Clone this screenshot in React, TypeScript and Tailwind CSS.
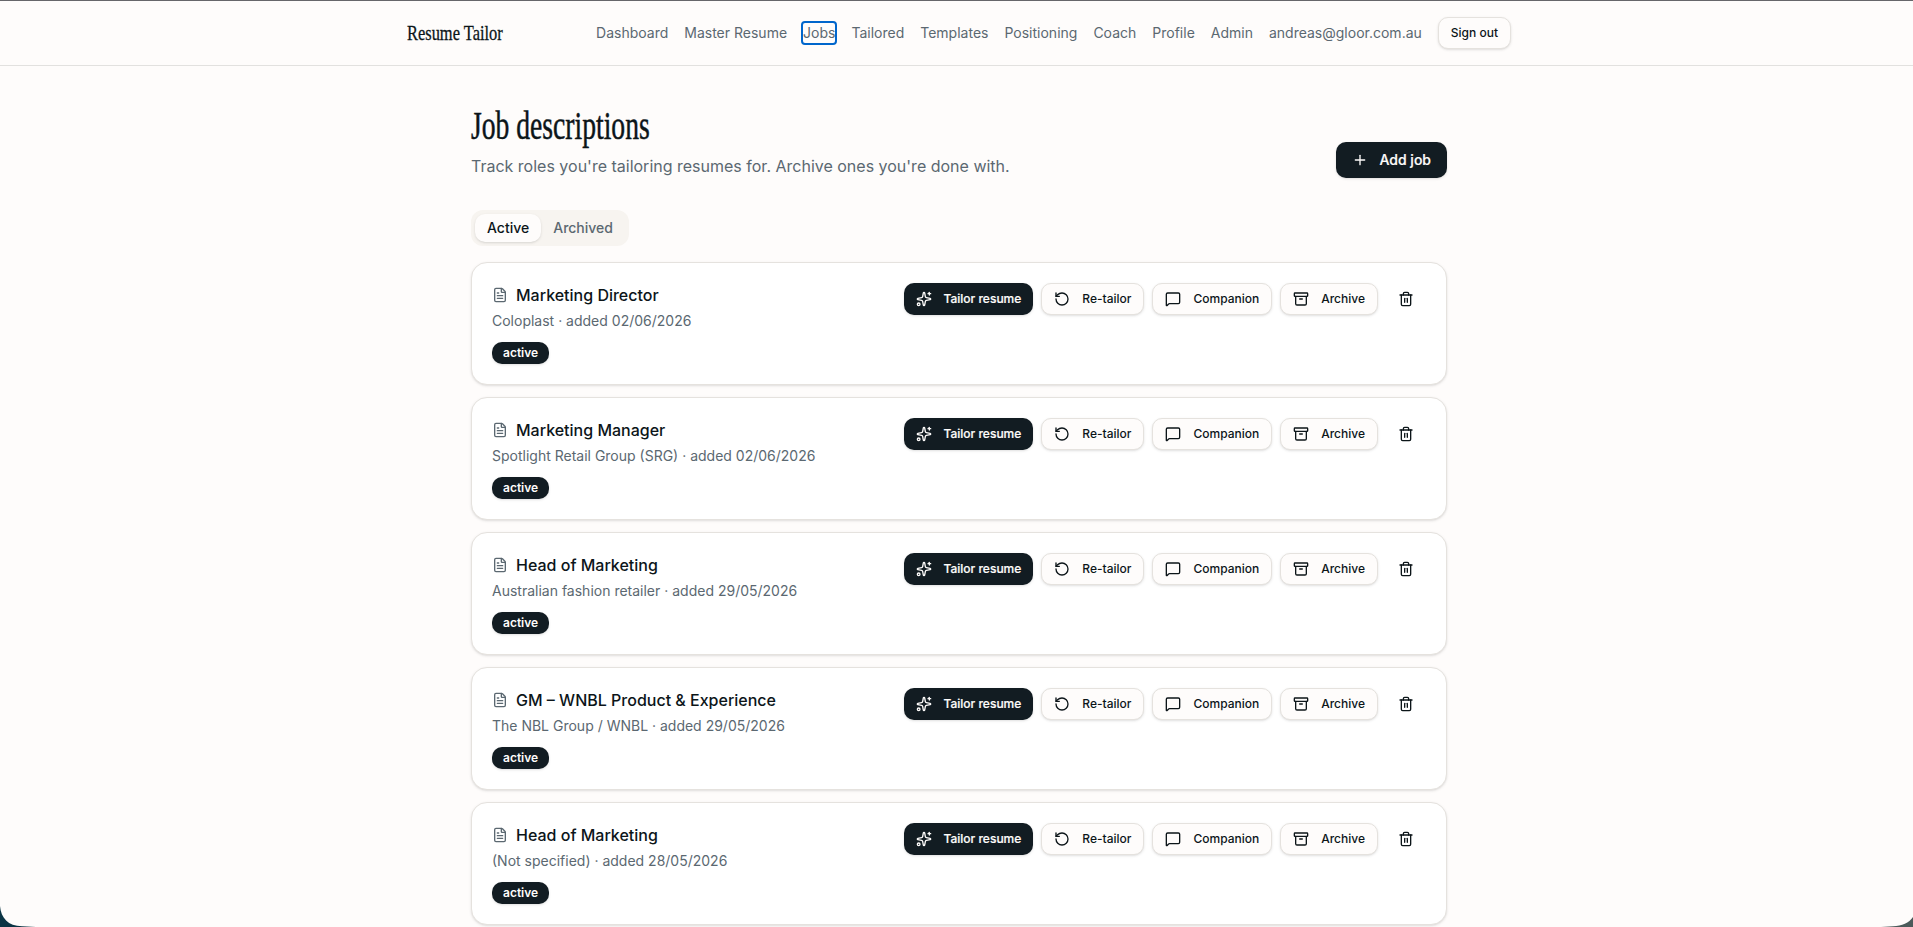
import type { ReactNode } from "react"
import { clsx } from "clsx"
import {
  Archive,
  FileText,
  MessageSquare,
  Plus,
  RotateCcw,
  Sparkles,
  Trash2,
} from "lucide-react"

type Job = {
  id: number
  title: string
  company: string
  added: string
  status: string
}

const navItems = [
  "Dashboard",
  "Master Resume",
  "Jobs",
  "Tailored",
  "Templates",
  "Positioning",
  "Coach",
  "Profile",
  "Admin",
]

const jobs: Job[] = [
  { id: 1, title: "Marketing Director", company: "Coloplast", added: "02/06/2026", status: "active" },
  { id: 2, title: "Marketing Manager", company: "Spotlight Retail Group (SRG)", added: "02/06/2026", status: "active" },
  { id: 3, title: "Head of Marketing", company: "Australian fashion retailer", added: "29/05/2026", status: "active" },
  { id: 4, title: "GM – WNBL Product & Experience", company: "The NBL Group / WNBL", added: "29/05/2026", status: "active" },
  { id: 5, title: "Head of Marketing", company: "(Not specified)", added: "28/05/2026", status: "active" },
]

type ButtonProps = {
  children?: ReactNode
  icon?: ReactNode
  variant?: "primary" | "outline" | "ghost"
  size?: "sm" | "md"
  label?: string
}

const Button = ({ children, icon, variant = "outline", size = "sm", label }: ButtonProps) => (
  <button
    aria-label={label}
    className={clsx(
      "inline-flex shrink-0 items-center justify-center gap-3 rounded-[10px] font-medium whitespace-nowrap",
      size === "sm" ? "h-8 px-3 text-xs" : "h-9 px-4 text-sm",
      {
        "bg-[#121c22] text-[#fefcfb] shadow-sm [-webkit-text-stroke:0.2px]": variant === "primary",
        "border border-[#e5e2de] bg-[#fefcfb] text-[#0c1519] shadow-sm": variant === "outline",
        "text-[#0c1519]": variant === "ghost",
      }
    )}
  >
    {icon}
    {children}
  </button>
)

const Header = () => (
  <header className="border-b border-[#e2e1df] pl-[5px]">
    <div className="mx-auto flex h-16 max-w-6xl items-center justify-between px-6">
      <a className="w-24 font-['Liberation_Serif'] text-[22px] leading-7 whitespace-nowrap text-[#0c1519] [-webkit-text-stroke:0.3px]">
        <span className="inline-block origin-left scale-x-[0.747]">Resume Tailor</span>
      </a>
      <nav className="flex items-center gap-4 text-sm text-[#5b6871]">
        {navItems.map((item) => (
          <a
            key={item}
            className={clsx(item === "Jobs" && "rounded-xs outline-2 outline-[#0066cc]")}
          >
            {item}
          </a>
        ))}
        <span>andreas@gloor.com.au</span>
        <Button>Sign out</Button>
      </nav>
    </div>
  </header>
)

const JobCard = ({ job }: { job: Job }) => (
  <div className="flex h-[123px] items-start justify-between rounded-2xl border border-[#e5e2de] bg-white p-5 shadow-sm">
    <div>
      <div className="flex items-center gap-2">
        <FileText className="size-4 text-[#5b6871]" />
        <h3 className="text-base font-medium text-[#0c1519]">{job.title}</h3>
      </div>
      <p className="mt-1 text-sm text-[#5b6871]">
        {job.company} · added {job.added}
      </p>
      <span className="mt-[11px] flex h-[22px] w-fit items-center rounded-[10px] bg-[#121c22] px-[11px] text-xs font-semibold text-[#fefcfb] shadow-sm">
        {job.status}
      </span>
    </div>
    <div className="flex gap-2">
      <Button variant="primary" icon={<Sparkles className="size-4" />}>
        Tailor resume
      </Button>
      <Button icon={<RotateCcw className="size-4" />}>Re-tailor</Button>
      <Button icon={<MessageSquare className="size-4" />}>Companion</Button>
      <Button icon={<Archive className="size-4" />}>Archive</Button>
      <Button variant="ghost" label="Delete" icon={<Trash2 className="size-4" />} />
    </div>
  </div>
)

// Desktop showing behind the rounded window corners
const WindowCorners = () => (
  <>
    <svg className="absolute bottom-0 left-0 h-[21px] w-9" viewBox="0 0 36 21">
      <path d="M0 0C1 12 8 20 22 20.3L36 21H0Z" fill="#0b3444" />
    </svg>
    <svg className="absolute right-0 bottom-0 h-[10px] w-8" viewBox="0 0 32 10">
      <path d="M32 0C28 6 21 9 12 9.3L0 10H32Z" fill="#4b5a5a" />
    </svg>
  </>
)

export default function App() {
  return (
    <div className="relative h-[927px] overflow-hidden border-t border-[#66666a] bg-[#fefcfb] font-['Inter',sans-serif] antialiased">
      <Header />
      <div className="pl-[5px]">
        <main className="mx-auto max-w-5xl px-6 py-10">
          <div className="flex items-end justify-between">
            <div>
              <h1 className="h-10 w-48 font-['Liberation_Serif'] text-[39px] leading-10 whitespace-nowrap text-[#0c1519] [-webkit-text-stroke:0.5px]">
                <span className="inline-block origin-left scale-x-[0.708]">Job descriptions</span>
              </h1>
              <p className="mt-2 text-base text-[#5b6871]">
                Track roles you're tailoring resumes for. Archive ones you're done with.
              </p>
            </div>
            <Button variant="primary" size="md" icon={<Plus className="size-4" />}>
              Add job
            </Button>
          </div>
          <div className="mt-8 flex h-9 w-fit items-center rounded-xl bg-[#f7f4f0] p-1 text-sm font-medium text-[#5b6871]">
            <button className="h-7 rounded-[10px] bg-[#fefcfb] px-3 text-[#0c1519] shadow-sm">Active</button>
            <button className="h-7 px-3">Archived</button>
          </div>
          <div className="mt-4 space-y-3">
            {jobs.map((job) => (
              <JobCard key={job.id} job={job} />
            ))}
          </div>
        </main>
      </div>
      <WindowCorners />
    </div>
  )
}
